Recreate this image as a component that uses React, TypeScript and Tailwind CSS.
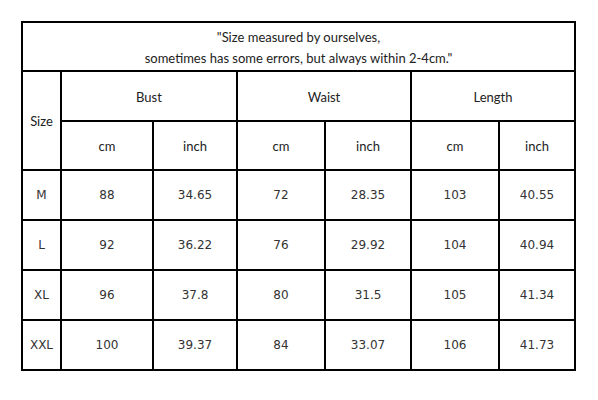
import React from "react"

const rows = [
    ["M", "88", "34.65", "72", "28.35", "103", "40.55"],
    ["L", "92", "36.22", "76", "29.92", "104", "40.94"],
    ["XL", "96", "37.8", "80", "31.5", "105", "41.34"],
    ["XXL", "100", "39.37", "84", "33.07", "106", "41.73"],
]

const head = "flex items-center justify-center pt-[3px] border-r-2 border-b-2 border-black font-['Lato','Open_Sans',sans-serif] text-[13px] text-[#222]"
const cell = "flex items-center justify-center border-r-2 border-b-2 border-black font-['DejaVu_Sans','Verdana',sans-serif] text-[12px] text-[#333]"

const App = () => {
    return (
        <div className="w-[598px] h-[400px] bg-white pl-[21px] pt-[21px]">
            <div className="grid w-[555px] grid-cols-[39px_92px_84px_88px_86px_88px_76px] grid-rows-[49px_50px_49px_50px_50px_50px_50px] border-l-2 border-t-2 border-black">
                <div className={`${head} col-span-7 flex-col leading-[21px] text-[#111]`}>
                    <span>"Size measured by ourselves,</span>
                    <span>sometimes has some errors, but always within 2-4cm."</span>
                </div>

                <div className={`${head} row-span-2`}>Size</div>
                <div className={`${head} col-span-2`}>Bust</div>
                <div className={`${head} col-span-2`}>Waist</div>
                <div className={`${head} col-span-2`}>Length</div>

                {["cm", "inch", "cm", "inch", "cm", "inch"].map((u, i) => (
                    <div key={i} className={head}>{u}</div>
                ))}

                {rows.map((r) =>
                    r.map((v, i) => (
                        <div key={r[0] + i} className={cell}>{v}</div>
                    ))
                )}
            </div>
        </div>
    )
}

export default App
